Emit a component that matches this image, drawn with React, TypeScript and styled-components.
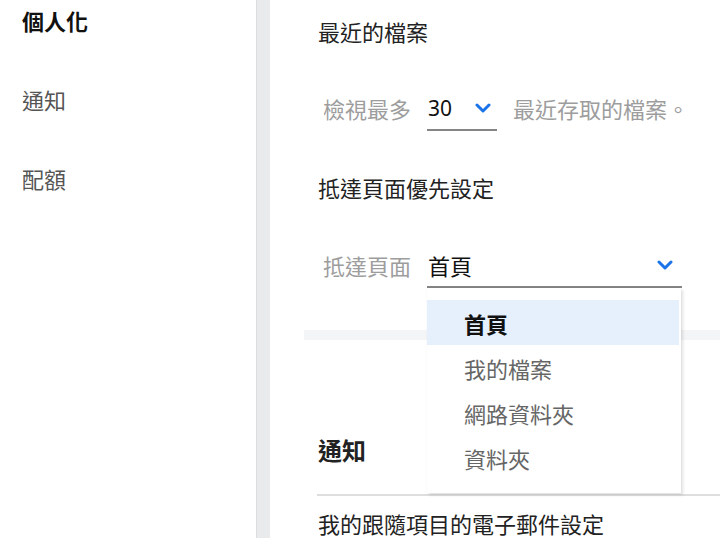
import React from "react";
import styled, { createGlobalStyle } from "styled-components";

const Global = createGlobalStyle`
  html, body { margin: 0; padding: 0; background: #fff; }
  body {
    font-family: "Noto Sans CJK TC", "Noto Sans", sans-serif;
    color: #222;
    overflow: hidden;
  }
  * { box-sizing: border-box; }
`;

const Page = styled.div`
  display: flex;
  width: 720px;
  height: 538px;
  overflow: hidden;
`;

const Sidebar = styled.nav`
  width: 256px;
  flex: none;
  padding-left: 22px;
  display: flex;
  flex-direction: column;
  gap: 37px;
`;

const NavItem = styled.div<{ $active?: boolean }>`
  height: 42px;
  line-height: 40px;
  font-size: 22px;
  font-weight: ${(p) => (p.$active ? 700 : 400)};
  color: ${(p) => (p.$active ? "#111" : "#555")};
`;

const Strip = styled.div`
  width: 14px;
  flex: none;
  background: #e9eaec;
  border-left: 1px solid #dcdde0;
`;

const Main = styled.main`
  flex: 1;
  padding-left: 34px;
  display: flex;
  flex-direction: column;
`;

const Section = styled.section`
  padding-left: 14px;
  display: flex;
  flex-direction: column;
`;

const Heading = styled.h2<{ $bold?: boolean; $top: number }>`
  margin: ${(p) => p.$top}px 0 0;
  height: 30px;
  line-height: 30px;
  font-size: ${(p) => (p.$bold ? "24px" : "22px")};
  font-weight: ${(p) => (p.$bold ? 700 : 400)};
  color: #222;
`;

const Row = styled.div<{ $top: number }>`
  margin-top: ${(p) => p.$top}px;
  padding-left: 5px;
  display: flex;
  align-items: center;
  gap: 16px;
  height: 42px;
`;

const Label = styled.span`
  font-size: 22px;
  color: #9d9d9d;
  line-height: 38px;
  padding-bottom: 4px;
`;

const SelectWrap = styled.div`
  position: relative;
`;

const Select = styled.div<{ $width: number; $pad: number }>`
  width: ${(p) => p.$width}px;
  height: 42px;
  border-bottom: 2px solid #858585;
  display: flex;
  align-items: center;
  justify-content: space-between;
  padding: 0 ${(p) => p.$pad}px 3px 0;
  font-size: 22px;
  color: #111;
`;

const Value = styled.span<{ $latin?: boolean }>`
  font-family: ${(p) =>
    p.$latin ? '"Noto Sans", sans-serif' : '"Noto Sans CJK TC", sans-serif'};
  font-size: ${(p) => (p.$latin ? "21px" : "22px")};
  padding-left: 1px;
`;

const Menu = styled.ul`
  position: absolute;
  top: 42px;
  left: 0;
  width: 254px;
  margin: 0;
  padding: 12px 0 13px;
  list-style: none;
  background: #fff;
  box-shadow: 2px 2px 3px rgba(0, 0, 0, 0.12), 0 0 1px rgba(0, 0, 0, 0.08);
  z-index: 5;
`;

const Option = styled.li<{ $selected?: boolean }>`
  height: 45px;
  line-height: 46px;
  padding-left: 37px;
  font-size: 22px;
  margin-right: 2px;
  font-weight: ${(p) => (p.$selected ? 700 : 400)};
  color: ${(p) => (p.$selected ? "#111" : "#666")};
  background: ${(p) => (p.$selected ? "#e5f0fc" : "transparent")};
`;

const Band = styled.div`
  margin-top: 42px;
  height: 10px;
  background: #f4f5f6;
`;

const Rule = styled.div`
  margin: 29px 0 0 -1px;
  height: 2px;
  background: #dedede;
`;

const Text = styled.p`
  margin: 12px 0 0;
  height: 30px;
  line-height: 30px;
  font-size: 22px;
  color: #222;
`;

const Chevron = () => (
  <svg width="16" height="10" viewBox="0 0 16 10" aria-hidden="true">
    <polyline
      points="2,2 8,8 14,2"
      fill="none"
      stroke="#1a73e8"
      strokeWidth="3"
      strokeLinecap="round"
      strokeLinejoin="round"
    />
  </svg>
);

const options = ["首頁", "我的檔案", "網路資料夾", "資料夾"];

export default function App() {
  return (
    <>
      <Global />
      <Page>
        <Sidebar>
          <NavItem $active>個人化</NavItem>
          <NavItem>通知</NavItem>
          <NavItem>配額</NavItem>
        </Sidebar>
        <Strip />
        <Main>
          <Section>
            <Heading $top={16}>最近的檔案</Heading>
            <Row $top={43}>
              <Label>檢視最多</Label>
              <Select $width={70} $pad={6}>
                <Value $latin>30</Value>
                <Chevron />
              </Select>
              <Label>最近存取的檔案。</Label>
            </Row>
            <Heading $top={41}>抵達頁面優先設定</Heading>
            <Row $top={44}>
              <Label>抵達頁面</Label>
              <SelectWrap>
                <Select $width={255} $pad={9}>
                  <Value>首頁</Value>
                  <Chevron />
                </Select>
                <Menu>
                  {options.map((o, i) => (
                    <Option key={o} $selected={i === 0}>
                      {o}
                    </Option>
                  ))}
                </Menu>
              </SelectWrap>
            </Row>
          </Section>
          <Band />
          <Section>
            <Heading $bold $top={95}>通知</Heading>
            <Rule />
            <Text>我的跟隨項目的電子郵件設定</Text>
          </Section>
        </Main>
      </Page>
    </>
  );
}
